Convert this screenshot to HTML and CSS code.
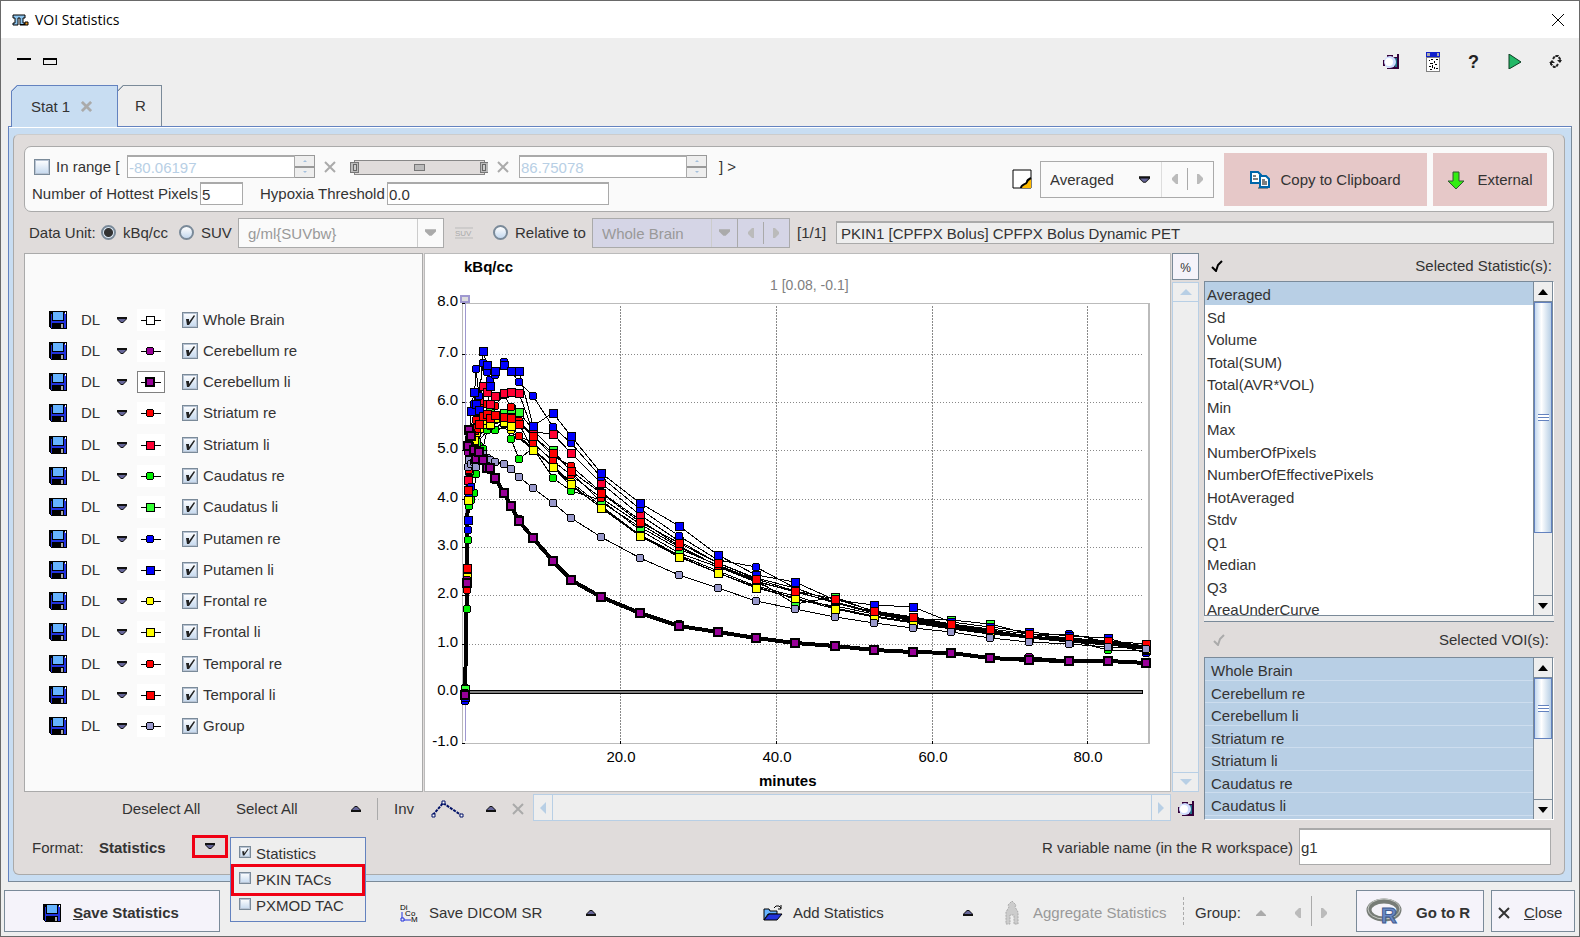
FILE: index.html
```html
<!DOCTYPE html>
<html lang="en">
<head>
  <meta charset="UTF-8">
  <meta name="viewport" content="width=device-width, initial-scale=1.0">
  <title>VOI Statistics</title>
  <link rel="stylesheet" href="styles.css">
</head>
<body>
  <!-- Shared icons -->
  <svg class="sprite" aria-hidden="true">
    <symbol id="disk" viewBox="0 0 18 18">
      <path d="M0 0h18v18H2l-2-2z" fill="#000"/>
      <path d="M2 3h1v14h-1zM15 2h2v15h-2zM3 10h13v2H3z" fill="#2233dd"/>
      <path d="M4 1h10v8H4z" fill="#66b3ff"/>
      <path d="M5 12h10v6H5z" fill="#000"/>
      <path d="M12 13h2v4h-2z" fill="#aaa"/>
      <path d="M16 1h1v2h-1z" fill="#fff"/>
    </symbol>
    <symbol id="down" viewBox="0 0 10 6">
      <path d="M0 0h10v2L6 6H4L0 2z" fill="#111"/>
      <path d="M1 2h8L6 5H4z" fill="#666699"/>
    </symbol>
    <symbol id="up" viewBox="0 0 10 6">
      <path d="M0 6h10V4L6 0H4L0 4z" fill="#111"/>
      <path d="M1 4h8L6 1H4z" fill="#666699"/>
    </symbol>
    <symbol id="left" viewBox="0 0 6 10"><path d="M6 0H4L0 4v2l4 4h2z" fill="currentColor"/></symbol>
    <symbol id="right" viewBox="0 0 6 10"><path d="M0 0h2l4 4v2l-4 4H0z" fill="currentColor"/></symbol>
    <symbol id="cross" viewBox="0 0 12 12"><path d="M1 1l10 10M11 1L1 11" stroke="currentColor" stroke-width="2" fill="none"/></symbol>
    <symbol id="tick" viewBox="0 0 12 12"><path d="M1 7l4 4 2-6 4-4" stroke="currentColor" stroke-width="2" fill="none"/></symbol>
    <symbol id="camera" viewBox="0 0 18 16">
      <path d="M7 3h7V0h2v15H7z" fill="#33003a"/>
      <path d="M12 4h2v9h-2z" fill="#1f6f86"/>
      <path d="M0 6h2v6H0zM4 1h6v2H4zM4 14h6v1H4z" fill="#33003a"/>
      <circle cx="7" cy="8" r="6" fill="#cfdcff"/>
      <circle cx="6" cy="8" r="4" fill="#fff"/>
    </symbol>
  </svg>

  <div class="window">
    <header class="titlebar">
      <svg class="logo" width="17" height="12" viewBox="0 0 17 12"><path d="M1 1h12v3h-2v5h2v2H8V4H6v7H1V9h2V4H1z" fill="#8cc4ee" stroke="#000" stroke-width="1"/><path d="M8 10h8v1H8z"/><path d="M13 8h3v3h-3z" fill="#f39a1e" stroke="#000"/></svg>
      <h1>VOI Statistics</h1>
      <button class="window-close" aria-label="Close window"><svg width="12" height="12" viewBox="0 0 12 12"><path d="M0 0l12 12M12 0L0 12" stroke="#000"/></svg></button>
    </header>

    <div class="toolbar">
      <button aria-label="Minimize"><svg width="14" height="8"><path d="M0 0h14v2H0z"/></svg></button>
      <button aria-label="Restore"><svg width="14" height="8"><path d="M0 0h14v7H0zM1 2v4h12V2z" fill-rule="evenodd"/></svg></button>
      <div class="toolbar-right">
        <button aria-label="Capture"><svg width="18" height="16"><use href="#camera"/></svg></button>
        <button aria-label="Report">
          <svg width="14" height="20" viewBox="0 0 14 20" shape-rendering="crispEdges"><path d="M0 5h14v15H0z" fill="#808080"/><path d="M1 6h12v13H1z" fill="#fff"/><path d="M0 0h14v5H0z" fill="#1020cc"/><path d="M1 1h3v3H1zM11 1h2v3h-2z" fill="#aaa"/><path d="M3 8h1v1H3zM5 7h2v1H5zM8 9h1v2H8zM10 7h2v1h-2zM4 11h3v1H4zM9 12h2v1H9zM3 14h2v1H3zM6 13h1v3H6zM8 15h1v2H8zM10 16h2v1h-2zM4 17h2v1H4z"/></svg>
        </button>
        <button class="help" aria-label="Help">?</button>
        <button aria-label="Run"><svg width="14" height="15" viewBox="0 0 14 15"><path d="M1 0v15l12-7z" fill="#22b866" stroke="#0b3b20"/></svg></button>
        <button aria-label="Refresh">
          <svg width="13" height="14" viewBox="0 0 13 14" fill="none" stroke="#222" stroke-width="2"><path d="M4 4l2-3h3l2 3v3M9 9l-2 3H5L2 9V7" stroke-dasharray="3 1"/><path d="M8 5h5l-2 3zM0 8h6L3 5z" fill="#222" stroke="none"/></svg>
        </button>
      </div>
    </div>

    <nav class="tabs" role="tablist">
      <button class="tab active" role="tab" aria-selected="true">Stat 1
        <svg width="11" height="11" viewBox="0 0 12 12"><path d="M1 1l10 10M11 1L1 11" stroke="#aaa" stroke-width="3"/></svg>
      </button>
      <button class="tab tab-r" role="tab" aria-selected="false">R</button>
    </nav>

    <main class="pane">
      <div class="panel">
        <section class="card">
          <div class="card-fields">
            <div class="field-row">
              <input type="checkbox" id="inRange" class="range-check">
              <label for="inRange" class="range-label">In range [</label>
              <input type="text" class="range-input" value="-80.06197" aria-label="Range minimum" disabled>
              <span class="spinner"><button disabled aria-label="Increase minimum"></button><button disabled aria-label="Decrease minimum"></button></span>
              <button class="clear" aria-label="Reset minimum" disabled><svg width="12" height="12"><use href="#cross"/></svg></button>
              <svg class="slider" width="138" height="16" viewBox="0 0 138 16" shape-rendering="crispEdges">
                <path d="M4 1h130v14H4z" fill="#e0dcdb" stroke="#888"/>
                <path d="M0 3h8v10H0zM130 3h8v10h-8zM64 5h10v6H64z" fill="#bbb" stroke="#777" stroke-width="1"/>
                <path d="M3 5h3v6H3zM132 5h3v6h-3z" fill="#ccc" stroke="#666"/>
              </svg>
              <button class="clear clear-max" aria-label="Reset maximum" disabled><svg width="12" height="12"><use href="#cross"/></svg></button>
              <input type="text" class="range-input" value="86.75078" aria-label="Range maximum" disabled>
              <span class="spinner"><button disabled aria-label="Increase maximum"></button><button disabled aria-label="Decrease maximum"></button></span>
              <span class="range-end">] &gt;</span>
            </div>
            <div class="field-row">
              <label for="hottest" class="hottest-label">Number of Hottest Pixels</label>
              <input type="text" id="hottest" class="hottest" value="5">
              <label for="hypoxia" class="hypoxia-label">Hypoxia Threshold</label>
              <input type="text" id="hypoxia" class="hypoxia" value="0.0">
            </div>
          </div>
          <svg class="note" width="20" height="20" viewBox="0 0 20 20"><path d="M1 1h18v18H1z" fill="#fff" stroke="#000"/><path d="M19 10v9h-9c0-3 5-3 5-6 0-2 2-3 4-3z" fill="#fb0"/><path d="M9 19c0-4 5-3 6-6 0-2 2-3 4-4" fill="none" stroke="#000" stroke-width="2"/></svg>
          <div class="combo combo-stat">
            <select aria-label="Statistic"><option>Averaged</option></select>
            <svg class="combo-arrow" width="11" height="7"><use href="#down"/></svg>
            <span class="steps"><button disabled aria-label="Previous statistic"><svg width="6" height="10"><use href="#left"/></svg></button><button disabled aria-label="Next statistic"><svg width="6" height="10"><use href="#right"/></svg></button></span>
          </div>
          <button class="pink copy">
            <svg width="20" height="18" viewBox="0 0 20 18"><path d="M8 16h10v2H8z" fill="#888"/><path d="M1 1h7l3 3v8H1z" fill="#fff" stroke="#06a" stroke-width="2"/><path d="M3 5h3M3 8h5" stroke="#000"/><path d="M10 5h6l3 3v8h-9z" fill="#fff" stroke="#06a" stroke-width="2"/><path d="M12 9h3M12 11h5M12 13h5" stroke="#000"/></svg>
            Copy to Clipboard
          </button>
          <button class="pink external">
            <svg width="18" height="19" viewBox="0 0 18 19"><path d="M6 1h6v9h5l-8 8-8-8h5z" fill="#3e1" stroke="#353"/></svg>
            External
          </button>
        </section>

        <section class="units">
          <span class="units-title">Data Unit:</span>
          <input type="radio" name="unit" id="unitKbq" checked><label for="unitKbq" class="kbq-label">kBq/cc</label>
          <input type="radio" name="unit" id="unitSuv"><label for="unitSuv" class="suv-label">SUV</label>
          <div class="combo combo-suv">
            <select aria-label="SUV unit" disabled><option>g/ml{SUVbw}</option></select>
            <span class="combo-drop"><svg width="11" height="7" viewBox="0 0 10 6"><path d="M0 0h10v2L6 6H4L0 2z" fill="#aaa"/></svg></span>
          </div>
          <svg class="suv-icon" width="18" height="12"><path d="M0 1h18M0 11h18" stroke="#bbb"/><text x="0" y="9">SUV</text></svg>
          <input type="radio" name="unit" id="unitRel"><label for="unitRel" class="rel-label">Relative to</label>
          <div class="combo combo-rel">
            <select aria-label="Reference region" disabled><option>Whole Brain</option></select>
            <span class="combo-drop"><svg width="11" height="7" viewBox="0 0 10 6"><path d="M0 0h10v2L6 6H4L0 2z" fill="#aaa"/></svg></span>
            <span class="steps"><button disabled aria-label="Previous region"><svg width="6" height="10"><use href="#left"/></svg></button><button disabled aria-label="Next region"><svg width="6" height="10"><use href="#right"/></svg></button></span>
          </div>
          <span class="series-count">[1/1]</span>
          <input type="text" class="series-name" aria-label="Series" value="PKIN1 [CPFPX Bolus] CPFPX Bolus Dynamic PET" readonly>
        </section>

        <section class="workspace">
          <div class="plot-side">
            <div class="plot-area">
              <ul class="regions" id="regions"></ul>
              <div class="chart">
                <svg id="chart" viewBox="425 254 745 537" preserveAspectRatio="xMinYMin meet" role="img" aria-label="Time activity curves"></svg>
              </div>
              <div class="zoom-column">
                <button class="percent">%</button>
                <div class="soft-scroll vertical">
                  <button disabled aria-label="Scroll up"><svg width="12" height="6"><path d="M6 0l6 6H0z"/></svg></button>
                  <button disabled aria-label="Scroll down"><svg width="12" height="6"><path d="M0 0h12L6 6z"/></svg></button>
                </div>
              </div>
            </div>
            <div class="plot-tools">
              <button class="deselect">Deselect All</button>
              <button class="select-all">Select All</button>
              <button class="tool-arrow" aria-label="Selection options"><svg width="10" height="6"><use href="#up"/></svg></button>
              <button class="inv">Inv</button>
              <button class="curve" aria-label="Curve style"><svg width="33" height="18" viewBox="0 0 33 18" fill="none" stroke="#001066"><path d="M2 15L12 3l18 12" stroke-width="2" stroke-dasharray="3 1"/><path d="M1 14h3v3H1zM11 1h3v3h-3zM29 14h3v3h-3z" fill="#fff"/></svg></button>
              <button class="tool-arrow curve-arrow" aria-label="Curve options"><svg width="10" height="6"><use href="#up"/></svg></button>
              <button class="curve-clear" aria-label="Remove curve" disabled><svg width="12" height="12"><use href="#cross"/></svg></button>
              <div class="soft-scroll horizontal">
                <button disabled aria-label="Scroll left"><svg width="6" height="12"><path d="M6 0v12L0 6z"/></svg></button>
                <button disabled aria-label="Scroll right"><svg width="6" height="12"><path d="M0 0v12l6-6z"/></svg></button>
              </div>
              <button class="snapshot" aria-label="Capture plot"><svg width="18" height="16"><use href="#camera"/></svg></button>
            </div>
          </div>

          <div class="selection">
            <div class="list-head">
              <button aria-label="Select statistics"><svg width="12" height="12"><use href="#tick"/></svg></button>
              <span id="statTitle">Selected Statistic(s):</span>
            </div>
            <div class="list list-stats">
              <ul role="listbox" aria-labelledby="statTitle">
                <li role="option" aria-selected="true">Averaged</li>
                <li role="option">Sd</li>
                <li role="option">Volume</li>
                <li role="option">Total(SUM)</li>
                <li role="option">Total(AVR*VOL)</li>
                <li role="option">Min</li>
                <li role="option">Max</li>
                <li role="option">NumberOfPixels</li>
                <li role="option">NumberOfEffectivePixels</li>
                <li role="option">HotAveraged</li>
                <li role="option">Stdv</li>
                <li role="option">Q1</li>
                <li role="option">Median</li>
                <li role="option">Q3</li>
                <li role="option">AreaUnderCurve</li>
              </ul>
              <div class="scrollbar">
                <button aria-label="Scroll up"><svg width="10" height="6"><path d="M5 0l5 6H0z"/></svg></button>
                <div class="track"><span class="thumb thumb-stats"></span></div>
                <button aria-label="Scroll down"><svg width="10" height="6"><path d="M0 0h10L5 6z"/></svg></button>
              </div>
            </div>
            <div class="splitter"></div>
            <div class="list-head list-head-voi">
              <button aria-label="Select VOIs" disabled><svg width="12" height="12"><use href="#tick"/></svg></button>
              <span id="voiTitle">Selected VOI(s):</span>
            </div>
            <div class="list list-voi">
              <ul role="listbox" aria-labelledby="voiTitle">
                <li role="option" aria-selected="true">Whole Brain</li>
                <li role="option" aria-selected="true">Cerebellum re</li>
                <li role="option" aria-selected="true">Cerebellum li</li>
                <li role="option" aria-selected="true">Striatum re</li>
                <li role="option" aria-selected="true">Striatum li</li>
                <li role="option" aria-selected="true">Caudatus re</li>
                <li role="option" aria-selected="true">Caudatus li</li>
                <li role="option" aria-selected="true"></li>
              </ul>
              <div class="scrollbar">
                <button aria-label="Scroll up"><svg width="10" height="6"><path d="M5 0l5 6H0z"/></svg></button>
                <div class="track"><span class="thumb thumb-voi"></span></div>
                <button aria-label="Scroll down"><svg width="10" height="6"><path d="M0 0h10L5 6z"/></svg></button>
              </div>
            </div>
          </div>
        </section>

        <section class="format">
          <span class="format-title">Format:</span>
          <b class="format-value">Statistics</b>
          <div class="format-picker">
            <button class="format-button" aria-label="Choose format"><svg width="10" height="6"><use href="#down"/></svg></button>
            <div class="menu">
              <label><input type="checkbox" checked>Statistics</label>
              <label class="marked"><input type="checkbox">PKIN TACs</label>
              <label><input type="checkbox">PXMOD TAC</label>
            </div>
          </div>
          <label for="rName" class="r-label">R variable name (in the R workspace)</label>
          <input type="text" id="rName" class="r-name" value="g1">
        </section>
      </div>
    </main>

    <footer class="footer">
      <button class="boxed save"><svg width="18" height="18" shape-rendering="crispEdges"><use href="#disk"/></svg><span><u>S</u>ave Statistics</span></button>
      <button class="dicom">
        <svg width="18" height="20" viewBox="0 0 18 20"><path d="M2 9v6M4 17h7" stroke="#2233dd"/><path d="M1 15h3v3H1z" fill="none" stroke="#2233dd"/><text x="0" y="7">Di</text><text x="5" y="13">C</text><text x="11" y="13">o</text><text x="11" y="19">M</text></svg>
        Save DICOM SR
      </button>
      <button class="footer-arrow" aria-label="Save options"><svg width="10" height="6"><use href="#up"/></svg></button>
      <button class="add">
        <svg width="20" height="17" viewBox="0 0 20 17"><path d="M1 5h5l1 2h7v3H5l-4 6z" fill="#66b3ff" stroke="#000"/><path d="M1 16l5-6h13l-5 6z" fill="#2233dd" stroke="#000"/><path d="M11 4l2-2h3l2 2M18 1v4h-3" fill="none" stroke="#000"/></svg>
        Add Statistics
      </button>
      <button class="footer-arrow add-arrow" aria-label="Add options"><svg width="10" height="6"><use href="#up"/></svg></button>
      <button class="aggregate" disabled>
        <svg width="14" height="25" viewBox="0 0 14 25"><path d="M7 1l4 4-1 2 3 5v12H9v-9H5v9H1V12l3-5-1-2z" fill="#ccc" stroke="#aaa" stroke-dasharray="2 1"/></svg>
        Aggregate Statistics
      </button>
      <span class="group">Group:</span>
      <button class="group-up" disabled aria-label="Group options"><svg width="10" height="6" viewBox="0 0 10 6"><path d="M5 0l5 5v1H0V5z" fill="#aaa"/></svg></button>
      <button class="group-prev" disabled aria-label="Previous group"><svg width="6" height="10"><use href="#left"/></svg></button>
      <button class="group-next" disabled aria-label="Next group"><svg width="6" height="10"><use href="#right"/></svg></button>
      <button class="boxed go-r">
        <svg width="36" height="30" viewBox="0 0 36 30"><ellipse cx="18" cy="12" rx="15" ry="9" fill="none" stroke="#777c77" stroke-width="5"/><ellipse cx="18" cy="11" rx="16" ry="10" fill="none" stroke="#c5c8c4" stroke-width="1"/><text x="15" y="25">R</text></svg>
        Go to R
      </button>
      <button class="boxed close"><svg width="12" height="12"><use href="#cross"/></svg><span><u>C</u>lose</span></button>
    </footer>
  </div>

  <script type="module">
  // Frame positions on the time axis
  const frames = [465, 467, 468, 469, 471, 474, 476, 479, 483, 487, 490, 495, 504, 511, 519, 533, 553, 571,
    601, 640, 679, 718, 756, 795, 835, 874, 913, 951, 990, 1029, 1069, 1108, 1146];

  const series = [
    { name: 'Whole Brain', shape: 'square', color: '#ffffff', hidden: true,
      y: [693, 600, 560, 510, 470, 452, 446, 440, 436, 430, 428, 430, 428, 432, 438, 450, 467, 486, 507, 535, 556, 573, 587, 598, 609, 617, 623, 629, 634, 638, 641, 645, 649] },
    { name: 'Cerebellum re', shape: 'circle', color: '#990099',
      y: [695, 580, 452, 440, 432, 448, 455, 458, 461, 466, 470, 480, 494, 505, 519, 539, 560, 579, 597, 613, 624, 633, 638, 643, 645, 649, 652, 653, 657, 657, 660, 660, 662] },
    { name: 'Caudatus re', shape: 'circle', color: '#00ee00',
      y: [688, 609, 540, 506, 500, 493, 474, 446, 449, 430, 426, 430, 420, 439, 459, 448, 478, 491, 500, 530, 553, 567, 582, 600, 606, 614, 621, 627, 632, 637, 640, 650, 650] },
    { name: 'Frontal re', shape: 'circle', color: '#ffff00',
      y: [694, 575, 500, 456, 460, 448, 436, 430, 425, 424, 426, 420, 424, 430, 436, 449, 466, 482, 506, 535, 555, 571, 586, 596, 608, 616, 622, 628, 633, 638, 641, 644, 648] },
    { name: 'Frontal li', shape: 'square', color: '#ffff00',
      y: [694, 577, 500, 454, 450, 440, 432, 428, 424, 420, 424, 418, 422, 426, 424, 450, 467, 484, 508, 536, 557, 573, 588, 598, 609, 617, 623, 628, 634, 638, 642, 645, 649] },
    { name: 'Caudatus li', shape: 'square', color: '#33ff33',
      y: [689, 580, 520, 470, 460, 450, 442, 419, 420, 415, 410, 415, 413, 409, 412, 430, 450, 472, 502, 527, 549, 565, 580, 604, 597, 612, 619, 620, 624, 634, 639, 641, 646] },
    { name: 'Striatum re', shape: 'circle', color: '#ff0000',
      y: [694, 590, 520, 470, 445, 432, 420, 410, 404, 404, 405, 406, 395, 407, 421, 436, 456, 466, 492, 520, 546, 566, 582, 591, 603, 613, 621, 626, 632, 636, 640, 643, 647] },
    { name: 'Striatum li', shape: 'square', color: '#ff0033',
      y: [694, 570, 480, 440, 430, 410, 404, 400, 386, 392, 404, 396, 393, 392, 393, 432, 434, 453, 483, 515, 541, 563, 578, 588, 602, 612, 619, 625, 630, 636, 639, 642, 647] },
    { name: 'Temporal re', shape: 'circle', color: '#ff0000',
      y: [695, 570, 500, 448, 440, 438, 432, 428, 424, 421, 418, 420, 424, 426, 436, 443, 461, 475, 498, 524, 547, 566, 581, 592, 602, 613, 620, 626, 631, 636, 640, 643, 648] },
    { name: 'Temporal li', shape: 'square', color: '#ff0000',
      y: [694, 568, 490, 446, 436, 430, 428, 424, 416, 414, 418, 415, 417, 418, 424, 436, 453, 471, 493, 522, 543, 563, 579, 591, 599, 611, 617, 624, 629, 634, 638, 641, 644] },
    { name: 'Putamen re', shape: 'circle', color: '#0000ff',
      y: [701, 570, 530, 496, 487, 404, 369, 396, 363, 372, 380, 375, 362, 371, 382, 396, 427, 443, 477, 509, 536, 560, 567, 588, 602, 612, 618, 624, 629, 634, 634, 642, 653] },
    { name: 'Putamen li', shape: 'square', color: '#0000ff',
      y: [697, 575, 520, 465, 411, 392, 404, 410, 351, 365, 386, 371, 365, 371, 371, 426, 413, 436, 473, 503, 526, 555, 575, 582, 600, 605, 607, 622, 627, 632, 636, 638, 650] },
    { name: 'Group', shape: 'circle', color: '#9999cc',
      y: [693, 580, 467, 460, 464, 462, 467, 456, 454, 458, 460, 462, 464, 469, 477, 488, 503, 518, 537, 558, 575, 588, 601, 609, 617, 623, 628, 632, 638, 642, 644, 647, 649] },
    { name: 'Cerebellum li', shape: 'square', color: '#990099', bold: true,
      y: [695, 583, 446, 430, 436, 450, 459, 452, 460, 468, 468, 478, 493, 506, 521, 538, 561, 580, 597, 613, 626, 632, 638, 643, 646, 650, 652, 653, 658, 660, 661, 661, 663] },
  ];

  // Draw order puts the group and the active curve on top of the rest
  const drawOrder = ['Whole Brain', 'Caudatus re', 'Frontal re', 'Caudatus li', 'Striatum re',
    'Striatum li', 'Temporal re', 'Putamen re', 'Putamen li', 'Frontal li', 'Temporal li', 'Group', 'Cerebellum re', 'Cerebellum li'];
  const listOrder = ['Whole Brain', 'Cerebellum re', 'Cerebellum li', 'Striatum re', 'Striatum li', 'Caudatus re',
    'Caudatus li', 'Putamen re', 'Putamen li', 'Frontal re', 'Frontal li', 'Temporal re', 'Temporal li', 'Group'];
  const byName = (name) => series.find((s) => s.name === name);

  function marker(s, x, y) {
    if (s.shape === 'circle') return `<circle cx="${x}" cy="${y}" r="4" fill="${s.color}" stroke="#000"/>`;
    if (s.bold) return `<path d="M${x - 4} ${y - 4}h8v8h-8z" fill="${s.color}" stroke="#000" stroke-width="2"/>`;
    return `<path d="M${x - 4} ${y - 4}h8v8h-8z" fill="${s.color}" stroke="#000"/>`;
  }

  function drawChart() {
    const yTicks = [['8.0', 303], ['7.0', 354], ['6.0', 402], ['5.0', 450], ['4.0', 499], ['3.0', 547],
      ['2.0', 595], ['1.0', 644], ['0.0', 692], ['-1.0', 743]];
    const xTicks = [['20.0', 620], ['40.0', 776], ['60.0', 932], ['80.0', 1087]];
    let out = '<g shape-rendering="crispEdges">';
    out += '<path class="frame" d="M462 303H1149V743H462z"/><path class="frame" d="M1148 303V743"/>';
    out += '<path class="cursor" d="M465 303V741"/>';
    yTicks.forEach(([, y]) => {
      if (y > 303 && y < 743 && y !== 692) out += `<path class="grid-h" d="M466 ${y}H1143"/>`;
      out += `<path class="tick" d="M462 ${y}h3"/>`;
    });
    xTicks.forEach(([, x]) => {
      out += `<path class="grid-v" d="M${x} 306V741"/><path class="tick" d="M${x} 741v3"/>`;
    });
    out += '<path class="zero" d="M465 690H1142V693H465z"/>';
    out += '<path class="handle" d="M461 296h8v6h-8z"/>';
    drawOrder.map(byName).forEach((s) => {
      const points = frames.map((x, i) => `${x},${s.y[i]}`).join(' ');
      out += `<polyline class="curve-line${s.bold ? ' bold' : ''}" points="${points}"/>`;
    });
    drawOrder.map(byName).filter((s) => !s.hidden).forEach((s) => {
      frames.forEach((x, i) => { out += marker(s, x, s.y[i]); });
    });
    out += '</g>';
    yTicks.forEach(([text, y]) => { out += `<text class="axis" text-anchor="end" x="458" y="${y + 3}">${text}</text>`; });
    xTicks.forEach(([text, x]) => { out += `<text class="axis" text-anchor="middle" x="${x + 1}" y="762">${text}</text>`; });
    out += '<text class="axis-title" x="464" y="272">kBq/cc</text>';
    out += '<text class="axis-title" x="759" y="786">minutes</text>';
    out += '<text class="readout" x="770" y="290">1 [0.08, -0.1]</text>';
    document.getElementById('chart').innerHTML = out;
  }

  function drawRegions() {
    document.getElementById('regions').innerHTML = listOrder.map(byName).map((s, i) => `
      <li>
        <button aria-label="Save ${s.name}"><svg width="18" height="18" shape-rendering="crispEdges"><use href="#disk"/></svg></button>
        <button>DL</button>
        <button aria-label="Display options"><svg width="10" height="6"><use href="#down"/></svg></button>
        <button class="swatch${s.bold ? ' current' : ''}" aria-label="Curve marker"><svg width="20" height="12" viewBox="0 0 20 12" shape-rendering="crispEdges"><path d="M0 6h20" stroke="#000"/>${marker(s, 9, 6)}</svg></button>
        <input type="checkbox" id="region${i}" checked>
        <label for="region${i}">${s.name}</label>
      </li>`).join('');
  }

  drawChart();
  drawRegions();
  </script>
</body>
</html>
```
FILE: styles.css
```css
* {
  box-sizing: border-box;
}

body {
  margin: 0;
  font-family: "Liberation Sans", Arial, sans-serif;
  font-size: 15px;
  line-height: 18px;
  color: #333;
  background: #eee;
}

button,
input,
select {
  font: inherit;
  color: inherit;
  margin: 0;
}

button {
  display: flex;
  align-items: center;
  padding: 0;
  border: 0;
  background: none;
  white-space: nowrap;
}

svg {
  display: block;
  flex: none;
}

ul {
  list-style: none;
  margin: 0;
  padding: 0;
}

label,
span {
  white-space: nowrap;
}

.sprite {
  position: absolute;
  width: 0;
  height: 0;
}

.window {
  display: flex;
  flex-direction: column;
  min-height: 100vh;
  border: 1px solid #696969;
  background: #eee;
}

/* Title bar and toolbar */
.titlebar {
  display: flex;
  align-items: center;
  height: 37px;
  padding: 0 15px 0 11px;
  background: #fff;
}

.titlebar h1 {
  flex: 1;
  margin: 0 0 0 6px;
  font-family: "Open Sans", "Noto Sans", sans-serif;
  font-size: 14px;
  font-weight: 400;
  color: #000;
}

.toolbar {
  display: flex;
  align-items: center;
  gap: 12px;
  height: 47px;
  padding: 0 3px 0 16px;
}

.toolbar-right {
  display: flex;
  align-items: center;
  margin-left: auto;
}

.toolbar-right button {
  justify-content: center;
  width: 41px;
}

.help {
  font-size: 18px;
  font-weight: 700;
  color: #222;
}

/* Tabs */
.tabs {
  display: flex;
  padding-left: 10px;
}

.tab {
  position: relative;
  height: 41px;
  border: 1px solid #7a8a99;
  border-width: 1px 1px 0 1px;
  padding: 0 0 0 19px;
  background: linear-gradient(135deg, #7a8a99 4px, #eee 4px);
  clip-path: polygon(6px 0, 100% 0, 100% 100%, 0 100%, 0 6px);
}

.tab.active {
  z-index: 1;
  gap: 11px;
  width: 107px;
  height: 42px;
  margin-bottom: -1px;
  border-color: #6382bf;
  background: linear-gradient(135deg, #6382bf 4px, #c8ddf2 4px);
}

.tab-r {
  width: 45px;
  margin-left: -1px;
  padding: 0 0 0 17px;
}

.pane {
  display: flex;
  flex: 1;
  margin: 0 7px;
  padding: 7px 6px 6px 4px;
  border: 1px solid #6382bf;
  border-right-color: #7a8a99;
  border-bottom-color: #7a8a99;
  background: #c8ddf2;
  box-shadow: inset 0 1px #fff;
}

.panel {
  display: flex;
  flex-direction: column;
  flex: 1;
  padding: 11px 10px 0;
  border: 1px solid #aaa;
  border-top-color: #ccc;
  border-radius: 6px;
  background: #e0dcdb;
}

/* Form controls */
input[type="text"] {
  height: 23px;
  padding: 1px 0 0 1px;
  border: 1px solid #aaa;
  border-top-width: 2px;
  border-radius: 0;
  background: #fff;
}

input[type="text"]:disabled {
  color: #b8cfe5;
}

input[type="checkbox"] {
  appearance: none;
  width: 16px;
  height: 16px;
  border: 1px solid #7a8a99;
  box-shadow: inset 0 0 0 1px #b8c4d4;
  background: linear-gradient(#fff, #c4d8ee);
}

input[type="checkbox"]:checked {
  background: url("data:image/svg+xml,%3Csvg xmlns='http://www.w3.org/2000/svg' viewBox='0 0 14 14'%3E%3Cpath d='M3 6h3v3l5-7 1 1-6 9H4z' fill='%23222'/%3E%3C/svg%3E"), linear-gradient(#fff, #c4d8ee);
}

input[type="radio"] {
  appearance: none;
  width: 15px;
  height: 15px;
  margin-right: 7px;
  border: 2px solid #7a8a99;
  border-radius: 50%;
  background: linear-gradient(#fff, #c4d8ee);
}

input[type="radio"]:checked {
  background: radial-gradient(#333 4px, #dce8f4 5px);
}

.combo {
  display: flex;
  align-items: center;
  border: 1px solid #aaa;
  background: #fafafa;
}

.combo select {
  appearance: none;
  flex: 1;
  min-width: 0;
  padding: 2px 0 0 9px;
  border: 0;
  background: none;
  opacity: 1;
}

.combo select:disabled {
  color: #999;
}

.combo-drop {
  display: flex;
  align-items: center;
  justify-content: center;
  align-self: stretch;
  width: 26px;
  border-left: 1px solid #ccc;
}

.steps {
  display: flex;
  align-self: stretch;
  align-items: center;
  width: 52px;
  border-left: 1px solid #ddd;
  color: #bbb;
}

.steps button {
  justify-content: center;
  width: 25px;
  height: 22px;
}

.steps button + button {
  border-left: 1px solid #aaa;
}

.clear,
.curve-clear {
  color: #aaa;
}

/* Range card */
.card {
  display: flex;
  align-items: center;
  height: 66px;
  padding: 0 6px 0 7px;
  border: 1px solid #aaa;
  border-radius: 7px;
  background: #fafafa;
}

.card-fields {
  flex: 1;
  padding-top: 2px;
}

.field-row {
  display: flex;
  align-items: center;
}

.field-row + .field-row {
  margin-top: 4px;
}

.range-check {
  margin: 0 6px 0 2px;
}

.range-label {
  width: 71px;
}

.range-input {
  width: 168px;
}

.spinner {
  display: flex;
  flex-direction: column;
  width: 20px;
  height: 23px;
  border: 1px solid #999;
  border-left: 0;
}

.spinner button {
  flex: 1;
  background: #eee;
}

.spinner button + button {
  border-top: 2px solid #999;
}

.spinner button::before {
  content: "";
  margin: auto;
  border: 2px solid transparent;
  border-top-width: 0;
  border-bottom-color: #a3bfdc;
}

.spinner button + button::before {
  border-width: 2px 2px 0;
  border-top-color: #a3bfdc;
}

.clear {
  margin: 0 14px 0 9px;
}

.clear-max {
  margin: 0 10px 0 9px;
}

.range-end {
  margin-left: 12px;
}

.hottest-label {
  width: 168px;
}

.hottest {
  width: 43px;
}

.hypoxia-label {
  width: 127px;
  margin-left: 17px;
}

.hypoxia {
  width: 222px;
}

.combo-stat {
  width: 174px;
  height: 37px;
  margin: 0 10px 0 8px;
}

.combo-arrow {
  margin-right: 11px;
}

.pink {
  justify-content: center;
  height: 53px;
  padding-top: 2px;
  background: #e6c8c8;
}

.copy {
  gap: 10px;
  width: 203px;
}

.external {
  gap: 12px;
  width: 114px;
  margin-left: 6px;
}

/* Data unit row */
.units {
  display: flex;
  align-items: center;
  height: 41px;
  padding-left: 5px;
}

.units-title {
  width: 72px;
}

.kbq-label {
  width: 56px;
}

.suv-label {
  width: 37px;
}

.combo-suv {
  width: 206px;
  height: 30px;
}

.suv-icon {
  margin: 0 20px 0 11px;
  font-size: 8px;
  fill: #aaa;
}

.rel-label {
  width: 77px;
}

.combo-rel {
  width: 198px;
  height: 30px;
  background: #d5d5e6;
}

.combo-rel .steps {
  border-color: #aaa;
}

.series-count {
  width: 46px;
  padding-left: 7px;
}

.units .series-name {
  flex: 1;
  min-width: 0;
  padding-left: 4px;
  background: #eee;
}

/* Workspace */
.workspace {
  display: flex;
  flex: 1;
  gap: 5px;
}

.plot-side {
  display: flex;
  flex-direction: column;
  flex: 1;
  min-width: 0;
}

.plot-area {
  display: flex;
  flex: 1;
  gap: 1px;
}

.regions {
  display: grid;
  grid-auto-rows: 1fr;
  width: 399px;
  padding: 50px 0 49px 24px;
  border: 1px solid #aaa;
  background: #fafafa;
}

.regions li {
  display: grid;
  grid-template-columns: 32px 36px 20px 45px 21px auto;
  align-items: center;
}

.regions .swatch {
  width: 28px;
  height: 22px;
  padding-left: 4px;
  background: #fff;
}

.regions .swatch.current {
  padding-left: 3px;
  border: 1px solid #808080;
}

.chart {
  flex: 1;
  min-width: 0;
  border: 1px solid #bbb;
  background: #fff;
}

.chart svg {
  width: 100%;
}

.frame {
  fill: none;
  stroke: #bbb;
}

.cursor {
  stroke: #9f98d0;
}

.grid-h {
  stroke: #888;
  stroke-dasharray: 1 2;
}

.grid-v {
  stroke: #888;
  stroke-dasharray: 2 1;
}

.tick {
  stroke: #000;
}

.zero {
  fill: #808080;
  stroke: #000;
}

.handle {
  fill: #ddd;
  stroke: #9f98d0;
  stroke-width: 2;
}

.curve-line {
  fill: none;
  stroke: #000;
}

.curve-line.bold {
  stroke-width: 4;
}

.axis {
  fill: #000;
}

.axis-title {
  font-weight: 700;
  fill: #000;
}

.readout {
  font-size: 14px;
  fill: #808080;
}

.zoom-column {
  display: flex;
  flex-direction: column;
  gap: 2px;
  width: 27px;
}

.percent {
  justify-content: center;
  height: 27px;
  padding-top: 3px;
  border: 1px solid #7a8a99;
  background: #f5f3fa;
  font-size: 12px;
}

.soft-scroll {
  display: flex;
  flex: 1;
  justify-content: space-between;
  border: 1px solid #b8cfe5;
  background: #eee;
}

.soft-scroll button {
  justify-content: center;
}

.soft-scroll path {
  fill: #b8cfe5;
}

.vertical {
  flex-direction: column;
}

.vertical button {
  height: 19px;
  border-bottom: 1px solid #b8cfe5;
}

.vertical button + button {
  border: 0;
  border-top: 1px solid #b8cfe5;
}

.horizontal {
  height: 27px;
  margin-bottom: 3px;
}

.horizontal button {
  width: 19px;
  border-right: 1px solid #b8cfe5;
}

.horizontal button + button {
  border: 0;
  border-left: 1px solid #b8cfe5;
}

/* Row under the plot */
.plot-tools {
  display: flex;
  align-items: center;
  height: 34px;
  padding-left: 98px;
}

.deselect {
  width: 114px;
}

.select-all {
  width: 115px;
}

.tool-arrow {
  width: 26px;
  height: 22px;
}

.inv {
  width: 54px;
  height: 22px;
  padding-left: 16px;
  border-left: 1px solid #aaa;
}

.curve-arrow {
  margin-left: 22px;
}

.curve-clear {
  width: 21px;
}

.snapshot {
  margin: 0 3px 0 7px;
}

/* Lists on the right */
.selection {
  display: flex;
  flex-direction: column;
  width: 350px;
  padding-bottom: 6px;
}

.list-head {
  display: flex;
  align-items: center;
  justify-content: space-between;
  height: 28px;
  padding: 0 2px 2px 7px;
  color: #000;
}

.list-head span {
  color: #333;
}

.list-head-voi {
  height: 35px;
  padding: 0 5px 0 9px;
}

.list-head button:disabled {
  color: #aaa;
}

.list {
  display: flex;
  border: 1px solid #7a8a99;
  border-right-color: #fff;
  background: #fff;
}

.list ul {
  flex: 1;
  height: 0;
  min-height: 100%;
  overflow: hidden;
}

.list li {
  height: 23px;
  padding: 4px 0 0 2px;
}

.list li:nth-child(even) {
  height: 22px;
}

.list li[aria-selected] {
  background: #b8cfe5;
}

.list-stats {
  flex: 1;
}

.list-voi {
  height: 163px;
  border-bottom-color: #fff;
}

.list-voi li {
  padding-left: 6px;
  border-bottom: 1px solid #cdddee;
}

.splitter {
  height: 6px;
  border-bottom: 1px solid #7a8a99;
  background: #eee;
}

.scrollbar {
  display: flex;
  flex-direction: column;
  width: 20px;
  border: 1px solid #7a8a99;
  border-width: 0 1px;
  background: #eee;
}

.scrollbar button {
  justify-content: center;
  height: 20px;
  border-bottom: 1px solid #7a8a99;
}

.scrollbar .track + button {
  border: 0;
  border-top: 1px solid #7a8a99;
}

.track {
  flex: 1;
}

.thumb {
  display: flex;
  align-items: center;
  border: 1px solid #6382bf;
  background: linear-gradient(90deg, #c4d8ee, #fff 40%, #b8cfe5);
}

.thumb::before {
  content: "";
  width: 11px;
  height: 7px;
  margin: auto;
  background: repeating-linear-gradient(#6382bf 0 1px, #fff 1px 3px);
}

.thumb-stats {
  height: 231px;
}

.thumb-voi {
  height: 61px;
}

/* Format row */
.format {
  display: flex;
  align-items: center;
  height: 48px;
  padding: 0 3px 6px 8px;
}

.format-title {
  width: 67px;
  padding-top: 2px;
}

.format-value {
  width: 93px;
  padding-top: 2px;
}

.format-picker {
  position: relative;
}

.format-button {
  justify-content: center;
  width: 36px;
  height: 23px;
  margin-bottom: 2px;
  border: 3px solid #f00014;
}

.menu {
  position: absolute;
  z-index: 2;
  top: 2px;
  left: 38px;
  width: 136px;
  padding: 3px 3px 2px;
  border: 1px solid #6382bf;
  background: #eee;
}

.menu label {
  display: flex;
  align-items: center;
  gap: 5px;
  height: 26px;
  padding-left: 5px;
}

.menu .marked {
  outline: 3px solid #f00014;
}

.menu input[type="checkbox"] {
  width: 12px;
  height: 12px;
  margin-bottom: 4px;
}

.r-label {
  margin-left: auto;
  padding-top: 2px;
}

.format .r-name {
  width: 252px;
  height: 37px;
  margin: 0 0 2px 6px;
}

/* Footer */
.footer {
  display: flex;
  align-items: center;
  padding: 8px 4px 4px 3px;
}

.footer button,
.group {
  padding-top: 3px;
}

.boxed {
  height: 42px;
  border: 1px solid #7a8a99;
  background: #f5f3fa;
}

.save {
  gap: 12px;
  width: 216px;
  padding-left: 38px;
  font-weight: 700;
}

.dicom {
  gap: 11px;
  width: 186px;
  margin-left: 180px;
}

.dicom text {
  font-size: 8px;
  fill: #000;
}

.footer-arrow {
  width: 177px;
}

.add {
  gap: 10px;
  width: 200px;
}

.add-arrow {
  width: 42px;
}

.aggregate {
  gap: 14px;
  width: 179px;
  height: 28px;
  border-right: 1px dashed #aaa;
  color: #999;
}

.group {
  width: 72px;
  padding-left: 11px;
}

.group-up {
  width: 39px;
}

.group-prev,
.group-next {
  height: 30px;
  color: #bbb;
}

.group-prev {
  width: 17px;
  border-right: 1px solid #aaa;
}

.group-next {
  padding-left: 9px;
}

.go-r {
  gap: 14px;
  width: 128px;
  margin-left: auto;
  padding-left: 9px;
  font-weight: 700;
}

.go-r text {
  font-size: 22px;
  fill: #6b8ac4;
  stroke: #405a90;
}

.close {
  gap: 14px;
  width: 84px;
  margin-left: 7px;
  padding-left: 6px;
}
```
